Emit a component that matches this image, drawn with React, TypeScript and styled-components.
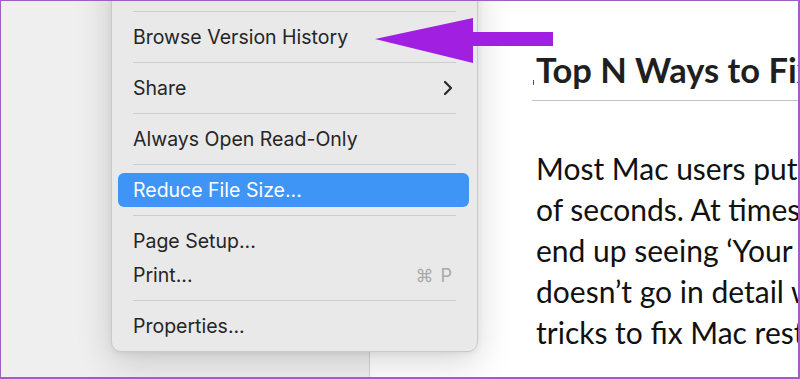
import React from "react";
import styled, { createGlobalStyle } from "styled-components";

const Global = createGlobalStyle`
  html, body { margin: 0; padding: 0; background: #ffffff; }
  * { box-sizing: border-box; }
`;

const Frame = styled.div`
  position: relative;
  width: 800px;
  height: 379px;
  overflow: hidden;
  display: flex;
  border-style: solid;
  border-color: #a35cc6;
  border-width: 1px 2px 2px 1px;
  background: #ffffff;
`;

const Sidebar = styled.div`
  width: 368px;
  flex: none;
  background: #efefef;
`;

const Page = styled.div`
  flex: 1;
  min-width: 0;
  background: #ffffff;
  border-left: 1px solid #d6d6d6;
  padding: 47px 0 0 162px;
  overflow: hidden;
`;

const Heading = styled.h1`
  position: relative;
  margin: 0;
  padding: 0 0 8px 4px;
  border-bottom: 1px solid #c4c4c4;
  font-family: Lato, "Open Sans", sans-serif;
  font-weight: 700;
  font-size: 34.5px;
  line-height: 44px;
  color: #1f1f1f;
  white-space: nowrap;
`;

const Marker = styled.span`
  position: absolute;
  left: 1px;
  top: 32px;
  width: 1px;
  height: 5px;
  background: #555;
`;

const Body = styled.div`
  margin-top: 47px;
  padding-left: 4px;
  font-family: Lato, "Open Sans", sans-serif;
  font-size: 30px;
  line-height: 41px;
  color: #111111;
  white-space: nowrap;
`;

const Line = styled.div``;

const Menu = styled.div`
  position: absolute;
  left: 110px;
  top: -41px;
  width: 367px;
  padding: 8px 8px 8px 6px;
  background: #e9e9e9;
  border: 1px solid #c9c9c9;
  border-radius: 10px;
  box-shadow: 0 10px 36px rgba(0, 0, 0, 0.16), 0 2px 6px rgba(0, 0, 0, 0.06);
  font-family: Inter, "Noto Sans", sans-serif;
  font-size: 19.5px;
  color: #252525;
`;

const Item = styled.div<{ $active?: boolean }>`
  height: 34px;
  display: flex;
  align-items: center;
  justify-content: space-between;
  padding: 0 16px 0 15px;
  border-radius: 6px;
  background: ${(p) => (p.$active ? "#3f95f5" : "transparent")};
  color: ${(p) => (p.$active ? "#ffffff" : "#252525")};
  white-space: nowrap;
`;

const Separator = styled.div`
  height: 17px;
  display: flex;
  align-items: center;
  padding: 0 13px 0 15px;
  &::after {
    content: "";
    flex: 1;
    height: 1px;
    background: #cdcdcd;
  }
`;

const Shortcut = styled.span`
  color: #a9a9a9;
  font-size: 18px;
  letter-spacing: 1px;
`;

const Arrow = styled.svg`
  position: absolute;
  left: 370px;
  top: 13px;
`;

const Chevron = () => (
  <svg width="10" height="16" viewBox="0 0 10 16">
    <path d="M2 2 L8 8 L2 14" fill="none" stroke="#2a2a2a" strokeWidth="2.2" strokeLinecap="round" strokeLinejoin="round" />
  </svg>
);

export default function App() {
  return (
    <>
      <Global />
      <Frame>
        <Sidebar />
        <Page>
          <Heading>
            <Marker />
            Top N Ways to Fix
          </Heading>
          <Body>
            <Line>Most Mac users put  their</Line>
            <Line>of seconds. At times, you</Line>
            <Line>end up seeing ‘Your Mac</Line>
            <Line>doesn’t go in detail why</Line>
            <Line>tricks to fix Mac restarting</Line>
          </Body>
        </Page>
        <Menu>
          <Item>Revert To</Item>
          <Separator />
          <Item>Browse Version History</Item>
          <Separator />
          <Item>
            Share
            <Chevron />
          </Item>
          <Separator />
          <Item>Always Open Read-Only</Item>
          <Separator />
          <Item $active>Reduce File Size...</Item>
          <Separator />
          <Item>Page Setup...</Item>
          <Item>
            Print...
            <Shortcut>⌘ P</Shortcut>
          </Item>
          <Separator />
          <Item>Properties...</Item>
        </Menu>
        <Arrow width="190" height="52" viewBox="0 0 190 52">
          <polygon points="4,25 102,4 102,18 182,18 182,32 102,32 102,49" fill="#a01fe0" />
        </Arrow>
      </Frame>
    </>
  );
}
